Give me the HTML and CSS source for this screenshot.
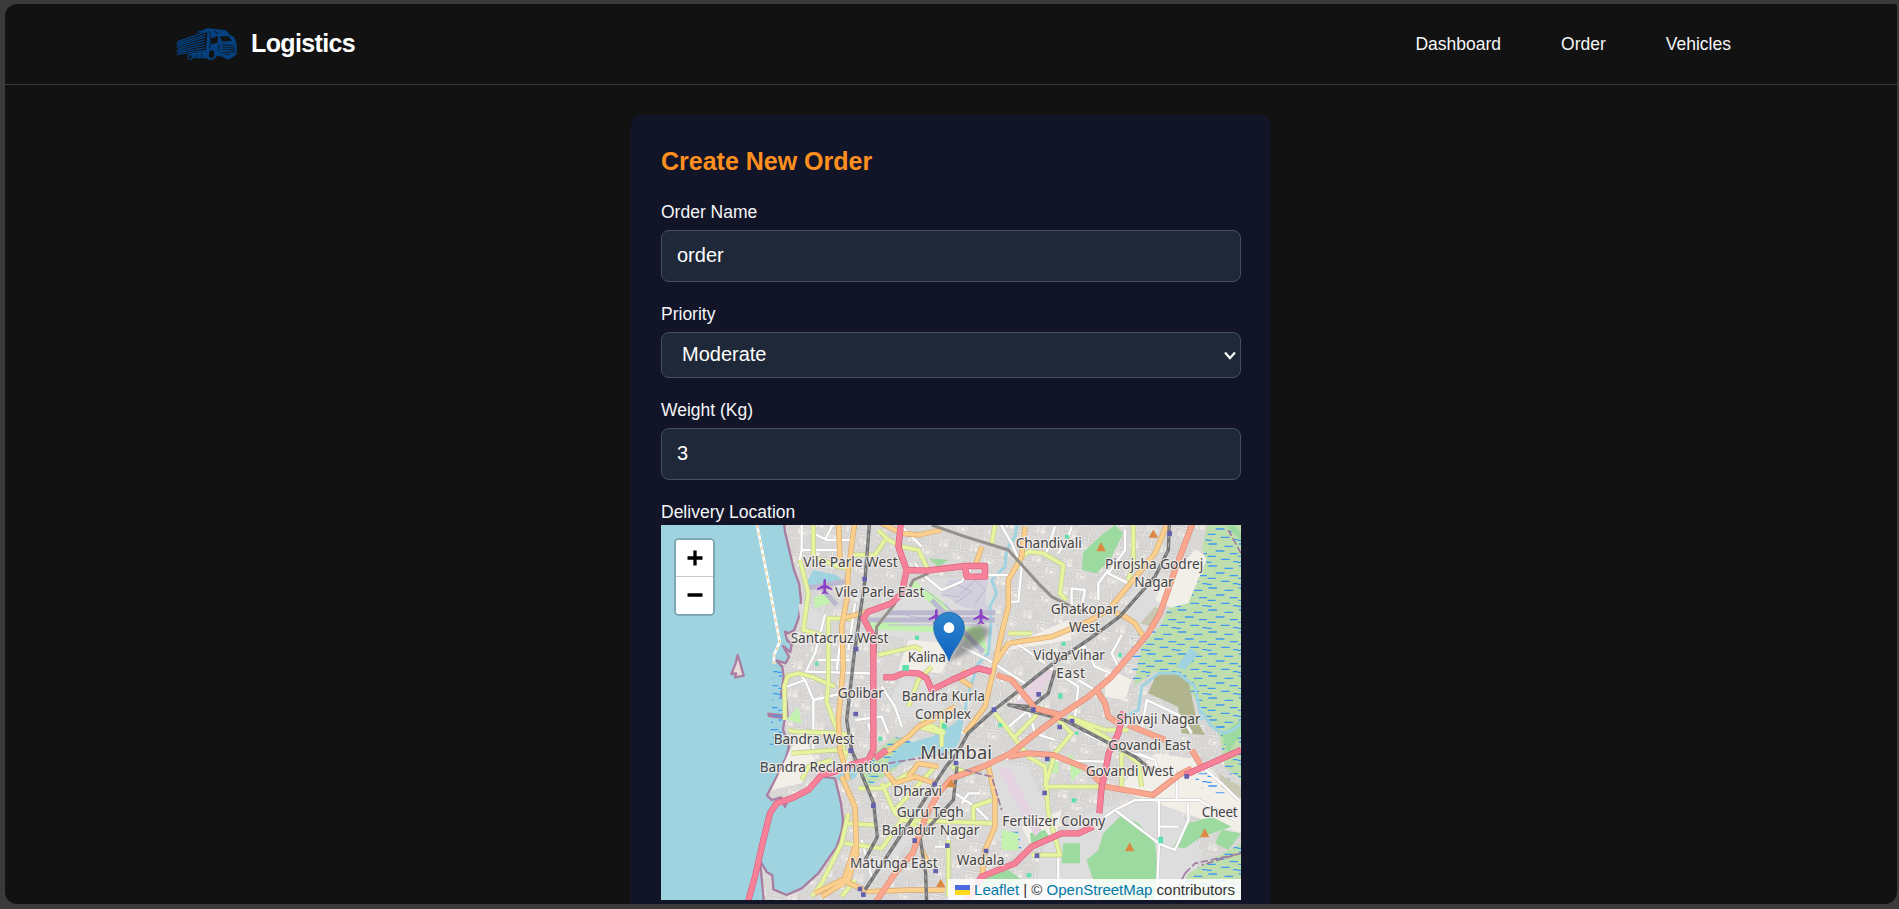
FILE: index.html
```
<!DOCTYPE html>
<html lang="en">
<head>
<meta charset="utf-8">
<title>Logistics</title>
<link rel="stylesheet" href="styles.css">
</head>
<body>
<div class="frame">
  <header class="header">
    <a class="brand">
      <svg class="logo" viewBox="0 0 186 100">
        <g class="truck-lines"><path d="M6 42L92 12M4 48L92 20M6 53L90 28M4 59L90 36M7 64L90 44M4 70L90 52M8 74L90 60M4 80L90 68M40 80L95 75"/></g>
        <path class="truck" d="M60 14L98 1L150 6Q160 10 164 20L178 27Q186 40 186 56V80L166 94Q154 98 146 88L126 84Q118 98 106 97Q94 96 92 84L50 88L48 78L92 70L97 14Z"/>
        <ellipse class="truck" cx="45" cy="88" rx="8" ry="9"/><path class="truck" d="M54 80H93V92H54Z"/>
        <g class="cut"><path d="M110 32L128 26L127 44L110 48Z"/><path d="M136 27L160 26L170 38L143 40Z"/><path d="M103 10Q110 30 104 62M132 48V72M140 50L178 54M141 57L180 61M142 64L180 67M139 75L184 72M66 80L63 90M80 78V88"/><ellipse cx="110" cy="79" rx="7" ry="11"/><ellipse cx="45" cy="88" rx="3" ry="5"/><path d="M118 9L132 19M150 80H164"/></g>
      </svg>
      <span>Logistics</span>
    </a>
    <nav class="nav"><a>Dashboard</a><a>Order</a><a>Vehicles</a></nav>
  </header>

  <main class="card">
    <h1>Create New Order</h1>
    <div class="field"><label for="name">Order Name</label><input id="name" type="text" value="order"></div>
    <div class="field"><label for="priority">Priority</label>
      <div class="select"><select id="priority"><option>Moderate</option></select>
      <svg class="chevron" viewBox="0 0 12 9"><path d="M1 1.5L6 7L11 1.5"/></svg></div>
    </div>
    <div class="field"><label for="weight">Weight (Kg)</label><input id="weight" type="text" value="3"></div>
    <div class="field map-field"><label>Delivery Location</label>
    <div class="map">
      <svg class="tiles" viewBox="18 15 1740 1125">
        <defs>
          <pattern id="streets" width="94" height="86" patternUnits="userSpaceOnUse" patternTransform="rotate(9)">
            <rect width="94" height="86" fill="#dad8d6"/>
            <path d="M8 8H34V30H8ZM54 42H84V66H54Z" fill="#f0ece6"/>
            <path d="M0 16H36L44 34H94M18 0V52L30 86M62 0V86M0 62H94M80 34V62M44 34L36 62M62 12H94M30 72H62M6 30V62M0 44H40M72 0V34M44 0V16L62 24M46 62V86M78 62V86M62 48H94" fill="none" stroke="#bdbbba" stroke-width="5"/>
            <path d="M0 16H36L44 34H94M18 0V52L30 86M62 0V86M0 62H94M80 34V62M44 34L36 62M62 12H94M30 72H62M6 30V62M0 44H40M72 0V34M44 0V16L62 24M46 62V86M78 62V86M62 48H94" fill="none" stroke="#f3f2f0" stroke-width="2.5"/>
          </pattern>
          <pattern id="marsh" width="92" height="66" patternUnits="userSpaceOnUse">
            <path d="M4 6H30M52 13H78M26 27H52M68 35H92M2 43H26M42 52H68M0 61H14M78 59H92" stroke="#3f98f5" stroke-width="4"/>
          </pattern>
          <linearGradient id="pin" x1="0" y1="0" x2="0" y2="1"><stop offset="0" stop-color="#2e85cb"/><stop offset="1" stop-color="#0e62c4"/></linearGradient>
          <filter id="soft"><feGaussianBlur stdDeviation="1.2"/></filter>
          <filter id="shade"><feGaussianBlur stdDeviation="6"/></filter>
        </defs>
        <rect width="1800" height="1200" fill="#9fd3e0"/>
        <g filter="url(#soft)">
        <path id="land" class="coast" fill="url(#streets)" d="M385 -10L390 35L405 100L417 150L432 190L438 240L432 290L418 330L400 340L390 335L396 360L410 372L406 396L384 378L402 410L392 430L362 420L382 440L386 470L378 528L394 540L398 588L340 581L342 588L390 594L384 628L402 680L394 710L365 770L336 826L350 840L378 832L390 860L400 838L430 826L465 810L500 770L540 775L558 850L564 900L560 935L545 980L490 1060L440 1105L395 1125L355 1108L352 1066L335 1056L315 1022L328 1160H1800V-10Z"/>
        <path class="coast" fill="#e9dcdd" d="M248 405L242 430L229 462L243 460L240 472L266 467L256 430Z"/>

        <!-- land cover -->
        <g fill="#dedddd">
          <path d="M780 190L1010 160L1030 390L900 400L660 330Z"/><path d="M1430 210L1560 150L1530 260L1480 340L1400 290Z"/>
          <path d="M1010 720L1120 740L1180 880L1120 1000L1020 960Z"/><path d="M1170 970L1330 860L1560 840L1640 1000L1590 1160H1130Z"/>
          <path d="M1430 560L1490 540L1620 600L1570 660L1440 620Z"/><path d="M740 470L820 500L870 560L780 600L700 560Z"/><path d="M430 250L540 290L500 360L440 340Z"/>
          <path d="M690 1000L750 920L770 960L680 1060L640 1090Z"/>
        </g>
        <g fill="#f2efe9">
          <path d="M1170 330L1240 300L1250 360L1060 390L1080 370Z"/><path d="M1350 440L1430 480L1410 540L1350 530Z"/><path d="M1520 195L1620 90L1660 110L1600 250L1550 265L1500 240Z"/>
          <path d="M1500 700L1640 720L1758 840V940L1480 840L1380 810Z"/><path d="M760 360L900 370L860 460L730 450Z"/><path d="M440 630L400 700L350 810L440 790L480 720Z"/><path d="M1100 920L1220 870L1200 960L1130 980Z"/>
        </g>
        <g fill="#bfdeae">
          <path d="M1760 0H1660L1640 90L1655 120L1600 250L1540 265L1515 320L1460 380L1435 500L1500 455L1580 480L1650 580L1700 660H1760Z"/>
          <path d="M1758 600L1690 620L1710 740L1758 780Z"/><path d="M1600 1060L1758 970V1150H1560Z"/>
          <path d="M600 740L720 650L790 670L720 750L640 800Z"/>
        </g>
        <path fill="url(#marsh)" d="M1760 20H1665L1640 90L1655 120L1600 250L1540 265L1515 320L1430 350L1435 500L1500 455L1580 480L1650 580L1700 660H1760Z"/>
        <path fill="url(#marsh)" d="M1758 600L1690 620L1710 740L1758 780ZM1600 1060L1758 970V1150H1560ZM640 730L720 650L790 670L720 750L640 800ZM1035 940L1090 930L1100 990L1050 990ZM355 440H380V680H345ZM1610 760H1730V820H1650Z"/>
        <g fill="#9ddaa0">
          <path d="M1285 95L1340 45L1380 15L1405 40L1365 120L1325 160L1280 150Z"/>
          <path d="M1345 940L1400 885L1450 910L1500 970L1512 1080V1160H1340L1295 1020L1330 990Z"/><path d="M1555 980L1600 910L1670 890L1730 920L1640 950L1590 985Z"/>
          <path d="M1225 970H1275V1030H1220ZM1700 930L1758 940L1720 990L1680 970Z"/><path d="M1125 940L1170 930L1190 960L1130 980Z"/><path d="M1715 20L1758 60V40L1740 15Z"/>
          <path d="M970 1070L1060 1050L1130 1100H970Z"/><path d="M820 115L880 120L850 140Z"/><path d="M1700 640L1758 600V640L1720 700Z"/>
        </g>
        <g fill="#c3f1b0">
          <path d="M475 235L520 215L525 250L480 265Z"/><path d="M640 290L760 315L980 320L1000 405L900 340L640 328Z"/><path d="M775 180L860 240L900 300L880 300L770 200Z"/><path d="M1040 930L1090 940L1090 990L1040 990Z"/><path d="M1175 720H1210V760H1180ZM1240 700L1290 740L1250 785Z"/><path d="M395 600L430 560L440 610Z"/>
        </g>
        <g fill="#d1d0dc"><path d="M880 180L1000 170L990 240L1010 280L920 260L860 220Z"/></g>
        <path fill="#e5d3e2" d="M1030 750L1060 740L1160 930L1140 950ZM1170 440L1200 450L1150 530L1100 580L1070 560Z"/>
        <path fill="#b0b58e" d="M1480 520L1500 470L1540 455L1600 480L1625 600L1650 645L1580 640L1570 560Z"/><path fill="#c8c8b3" d="M1455 310L1500 260L1520 270L1490 320ZM1690 760L1758 800V835L1700 800Z"/>
        <g fill="#9fd3e0"><path d="M455 185L475 150L545 165L560 180L460 205Z"/><path d="M1565 440L1605 385L1630 400L1590 450Z"/><path d="M700 720L740 675L830 650L900 610L930 570L915 660L890 700L780 710L700 750Z"/><path d="M540 770L620 735L600 775L560 790Z"/></g>
        <path d="M1085 15L1080 50L1055 90L1050 140L1010 180L1025 220L1005 260L1008 310L1005 350L1000 400L970 430L940 520L930 570M1640 600L1620 500L1570 460L1510 460L1460 500L1450 570L1390 600M1640 570Q1690 680 1758 610" class="river"/>
        <g class="runway"><path d="M640 300H1020M700 278H1020M830 240L985 395M450 205L570 185M500 205L545 255"/></g>
        <g fill="none" stroke="#b9b7d1" stroke-width="3"><path d="M680 292L720 275L780 292H980M860 225L910 230L960 180L990 210L960 250M900 190L950 215L900 250M700 315H980M870 250L960 370M940 280L1010 280M800 200L900 280"/></g>

        <!-- minor streets -->
        <g class="street case"><use href="#r-street"/></g>
        <g class="street">
          <path id="r-street" d="M440 15V90L430 140M440 90H550M465 35L515 60H600M540 0L510 60M510 285L480 400L455 450M395 500L450 480L430 460M450 480L475 540V700M475 540L560 520M490 420H585M450 455L650 460M560 330L545 450M600 250L580 390M780 130L805 165L860 210L920 185L950 140M980 165H1060M1030 0L1070 70L1100 140L1090 245H1060M740 20L800 80M1200 20L1170 110M1210 100L1240 50L1250 20M1410 30V90L1360 160L1420 190M1360 150L1330 190V240M1250 260L1250 205L1290 210L1280 260M1400 345L1370 400L1390 440M1240 400L1290 380L1320 440L1380 465M1180 440L1270 500L1260 590M1270 480L1320 510M1060 360L1100 380L1170 430M920 380L1000 420L1110 490L1090 540M600 600L680 590L700 640M640 610L660 680M680 500L720 560L740 620M1050 630L1120 570L1140 640L1200 660M1190 720L1350 725M1290 640L1400 690L1500 720M1350 890L1380 870L1440 840H1630L1740 900M1512 840V970L1380 870M1512 970L1505 1140M1512 920H1570M1510 970L1560 990L1600 900V850M1565 840V780L1560 750M1640 740L1700 790L1750 840M1210 1000V1140M1460 630L1475 540L1580 590L1610 640M1450 700L1500 720L1510 760M620 960L650 1070M840 980H880V930M900 820L960 860L1000 900M920 850L940 820L975 820"/>
        </g>

        <!-- yellow roads -->
        <g class="tertiary case"><use href="#r-tertiary"/></g>
        <g class="tertiary">
          <path id="r-tertiary" d="M475 15V110L550 140H590M435 120L460 220L445 330L500 345M530 130L590 150M520 295H590M520 290V490L515 545L535 600L560 660L570 720M390 600L388 500L398 468L430 460L470 470L540 500M400 630L420 635L560 640L590 650M410 700L540 690L580 700M440 780L460 740L530 720M590 105H660L690 60M670 30L700 60L740 80L790 90L820 150M1100 110L1120 95L1165 100L1225 135L1215 220L1235 240M1435 15V130L1420 180M1060 340H1130M670 405L780 380L800 390M1010 70L1020 15M830 440L790 480L760 560M1020 580L1060 630L1120 710L1170 740L1180 880M1210 600L1250 640L1200 700L1170 800M1160 560L1140 590L1080 650M610 805H680L780 750M680 790L720 880L800 930M720 870L840 740M840 620L790 620L860 640M860 570V680M800 600L870 640M740 900L1020 910M955 900V860L1010 840M880 960V1130M570 910L660 915M570 970L680 985L760 870M580 880L560 970L500 1090L470 1130M890 740L940 760L980 745M1240 590L1350 630L1420 630M1240 590L1350 650L1450 730L1460 800M1170 800H1340M1400 700V800M1180 880L1215 1005H1130M560 1130L600 1080"/>
        </g>

        <!-- orange roads -->
        <g class="secondary case"><use href="#r-secondary"/></g>
        <g class="secondary">
          <path id="r-secondary" d="M550 -10L555 120M600 0L580 150L575 240L560 320L565 440L550 600L555 690L580 780M560 295L620 280L650 270M680 10L740 40L790 45L860 30M980 80L960 140M1110 20L1100 110L1060 180L1060 260L1040 340L1020 430L990 560L930 640M950 500L920 480L930 450M1020 430L1060 370L1190 350L1310 300M1535 15L1500 100L1360 270L1290 310M1360 270L1410 290L1440 310L1465 350M900 560L850 590L790 620L760 650L690 700M690 750L720 790L780 770L840 790M760 770L790 730L850 740M1000 740L1020 830L1020 920L990 990L980 1080M560 770L600 860L605 1000L580 1080L500 1130M480 1120L560 1080L640 1115L760 1110L870 1110M600 980L560 1100M800 990L820 1030"/>
        </g>

        <!-- railways -->
        <g class="rail"><path id="r-rail" d="M645 -10L630 180L598 400L575 600L590 690L656 850L667 950L630 1020M906 740L895 840L795 950L812 1060L815 1150M1544 -10L1540 90L1500 170L1394 290L1306 355L1195 430L1017 570L939 640L906 700L873 740L795 860L728 960L630 1110M1200 450L1180 520L1130 560L1061 555L1228 600L1440 710L1490 750"/></g>
        <g class="rail-dash"><use href="#r-rail"/></g>
        <path class="metro" d="M740 -10L735 120M830 15L930 50L1060 90L1150 190L1190 230L1290 280M660 400L665 320L720 250M765 200L775 180L820 160"/>

        <!-- main roads -->
        <g class="primary case"><use href="#r-primary"/></g>
        <g class="primary"><path id="r-primary" d="M1620 -10L1560 150L1515 280L1480 340L1370 470L1300 530L1217 585L1130 650L1072 697L984 740L890 775L850 820L812 890L773 1000L720 1060L660 1150M1060 710L1120 700L1195 705L1294 745L1350 800L1494 825L1572 765L1610 745M1328 515L1350 550L1360 590L1390 610M1420 615L1530 660M1610 690L1640 740M1025 465L1070 480L1120 540L1140 565L1217 585"/></g>
        <g class="trunk case"><use href="#r-trunk"/></g>
        <g class="trunk"><path id="r-trunk" d="M740 -10L730 80L755 150L740 220L710 250L640 275L625 295L655 350V690L640 720L600 730L540 755L500 765L460 810L410 835L365 850L345 880L325 960L300 1070L275 1160M745 150L815 152L930 138H990V170H935L930 140M685 472H715L750 458L790 460L815 475L830 510L890 480L970 445L1010 455M660 715L695 690M1405 575L1390 640L1361 700L1350 760L1340 800L1333 880M930 1150L980 1070L1080 1030L1130 980L1220 940L1270 940L1315 920M1590 765L1758 690"/></g>
        <path class="boundary" d="M700 730L880 700M930 750L1010 770L1040 870M1758 100L1720 30M1590 1060L1620 1030L1758 1000L1640 1035M1590 1060L1550 1140"/>
        <path d="M306 15L345 210L374 365L357 405V432" stroke="#fff" stroke-width="8" fill="none"/><path d="M306 15L345 210L374 365L357 405V432" stroke="#f5c983" stroke-width="4" fill="none" stroke-dasharray="10 12"/>
        <g fill="#6360ae"><path d="M622 170h14v14h-14zM596 380h14v14h-14zM595 575h14v14h-14zM580 685h14v14h-14zM896 722h14v14h-14zM832 785h14v14h-14zM648 850h14v14h-14zM772 955h14v14h-14zM870 970h14v14h-14zM835 1046h14v14h-14zM986 986h14v14h-14zM1139 1000h14v14h-14zM1162 812h14v14h-14zM1170 710h14v14h-14zM1010 562h14v14h-14zM1128 562h14v14h-14zM1144 516h14v14h-14zM1537 34h14v14h-14zM1588 762h14v14h-14zM1207 614h14v14h-14zM1244 596h14v14h-14zM608 1100h14v14h-14zM618 1117h14v14h-14z"/></g>
        <g fill="#5de0ac"><path d="M742 435h20v17h-20zM780 347h12v12h-12zM480 425h10v12h-10zM1230 45h12v12h-12zM1220 365h12v12h-12zM1390 398h10v14h-10zM1210 520h12v16h-12zM860 610h16v16h-16zM1030 610h12v12h-12zM670 650h12v12h-12zM1250 835h14v12h-14zM1510 950h14v20h-14zM1115 1060h14v12h-14zM1260 635h10v10h-10z"/></g>
        <g fill="#dd8842"><path d="M1338 66L1352 94H1324ZM1495 28L1509 53H1481ZM1424 967L1438 994H1410ZM1649 925L1663 952H1635ZM888 777L903 802H873ZM857 1077L871 1101H843Z"/></g>
        <g fill="#8e3fc7"><path id="plane" d="M509 176Q513 176 513 184V194L532 206V211L513 205V215L519 220V223L509 220L499 223V220L505 215V205L486 211V206L505 194V184Q505 176 509 176Z"/><use href="#plane" x="335" y="90"/><use href="#plane" x="469" y="90"/></g>
        </g>

        <g class="labels">
          <text x="445" y="141" textLength="283">Vile Parle West</text><text x="540" y="230" textLength="268">Vile Parle East</text>
          <text x="407" y="370" textLength="293">Santacruz West</text><text x="758" y="427" textLength="115">Kalina</text>
          <text x="548" y="533" textLength="139">Golibar</text><text x="740" y="543" textLength="250">Bandra Kurla</text><text x="780" y="596" textLength="168">Complex</text>
          <text x="1082" y="83" textLength="198">Chandivali</text><text x="1350" y="147" textLength="295">Pirojsha Godrej</text><text x="1438" y="201" textLength="118">Nagar</text>
          <text x="1187" y="282" textLength="203">Ghatkopar</text><text x="1242" y="335" textLength="93">West</text><text x="1135" y="420" textLength="215">Vidya Vihar</text><text x="1204" y="473" textLength="86">East</text>
          <text x="1384" y="612" textLength="253">Shivaji Nagar</text><text x="1360" y="690" textLength="248">Govandi East</text><text x="1292" y="767" textLength="264">Govandi West</text>
          <text x="356" y="671" textLength="242">Bandra West</text><text x="314" y="755" textLength="388">Bandra Reclamation</text>
          <text class="city" x="796" y="716" textLength="215">Mumbai</text><text x="715" y="829" textLength="146">Dharavi</text><text x="725" y="892" textLength="201">Guru Tegh</text><text x="680" y="945" textLength="293">Bahadur Nagar</text>
          <text x="585" y="1043" textLength="263">Matunga East</text><text x="905" y="1034" textLength="143">Wadala</text><text x="1042" y="919" textLength="309">Fertilizer Colony</text><text x="1640" y="892" textLength="108">Cheet</text>
        </g>

        <path d="M882 425L930 335Q970 300 1005 330Q995 370 882 425Z" fill="#333" opacity=".4" filter="url(#shade)"/>
        <path d="M882 423C872 388 836 360 836 322A46 45 0 0 1 928 322C928 360 892 388 882 423Z" fill="url(#pin)" stroke="#2870b0" stroke-width="3"/><circle cx="882" cy="323" r="16" fill="#fff"/>
      </svg>
      <div class="zoom">
        <button aria-label="Zoom in"><svg viewBox="0 0 16 16"><path d="M.5 8h15M8 .5v15"/></svg></button>
        <button aria-label="Zoom out"><svg viewBox="0 0 16 16"><path d="M.5 8h15"/></svg></button>
      </div>
      <div class="attribution"><svg class="flag" viewBox="0 0 15 10"><path fill="#4c68e0" d="M0 0h15v5H0z"/><path fill="#ffd91a" d="M0 5h15v5H0z"/></svg><span><a>Leaflet</a> | © <a>OpenStreetMap</a> contributors</span></div>
    </div></div>
  </main>
</div>
</body>
</html>
```
FILE: styles.css
```
* { box-sizing: border-box; }
body { margin: 0; height: 909px; padding: 4px 2px 5px 5px; overflow: hidden; background: #3b3b3b; color: #f5f6f8; font: 17.5px/25px "Liberation Sans", Arial, sans-serif; }
.frame { height: 900px; overflow: hidden; background: #121212; border-radius: 12px 2px 12px 12px; }
.header { height: 81px; display: flex; justify-content: space-between; align-items: center; padding: 0 166px 0 170px; border-bottom: 1px solid #3a3a3a; }
.brand { display: flex; align-items: center; gap: 14px; color: #fff; font-size: 25px; font-weight: bold; letter-spacing: -.625px; }
.brand span { padding-bottom: 2px; }
.logo { width: 62px; height: 33px; }
.truck { fill: #05407f; }
.truck-lines { stroke: #05407f; stroke-width: 4; fill: none; }
.cut { fill: #121212; stroke: #121212; stroke-width: 2.5; }
.cut path:nth-of-type(n+3) { fill: none; }
.nav { display: flex; gap: 60px; }
.card { width: 640px; height: 830px; margin: 30px auto 0; padding: 30px; background: #121528; border-radius: 10px; display: flex; flex-direction: column; gap: 19px; }
h1 { margin: 0 0 2px; color: #ff8f1f; font-size: 25px; line-height: 33px; }
.field { display: flex; flex-direction: column; gap: 6px; }
.field.map-field { gap: 1px; }
label { display: block; padding-top: 1px; height: 25px; }
input, select { display: block; width: 100%; height: 52px; border: 1px solid #465061; border-radius: 8px; background: #1f2838; padding: 0 15px 1px; color: #fff; font: 20px "Liberation Sans", Arial, sans-serif; outline: 0; }
select { height: 46px; padding-left: 20px; padding-bottom: 2px; appearance: none; }
.select { position: relative; }
.chevron { position: absolute; right: 5px; top: 19px; width: 12px; height: 9px; fill: none; stroke: #fff; stroke-width: 2.2; }
.map { position: relative; height: 375px; overflow: hidden; }
.tiles { display: block; width: 580px; height: 375px; }
.tiles path { stroke-linejoin: round; }
.coast { stroke: #aa7ea1; stroke-width: 7; }
.river { fill: none; stroke: #9fd3e0; stroke-width: 9; }
.runway { fill: none; stroke: #bbb9cf; stroke-width: 15; }
.street { fill: none; stroke: #fff; stroke-width: 7; }
.street.case { stroke: #c6c4c2; stroke-width: 10; }
.tertiary { fill: none; stroke: #e6f49f; stroke-width: 11; }
.tertiary.case { stroke: #c3cc8d; stroke-width: 15; }
.secondary { fill: none; stroke: #fbcf8e; stroke-width: 12; }
.secondary.case { stroke: #d9a868; stroke-width: 16; }
.rail { fill: none; stroke: #747474; stroke-width: 10; }
.rail-dash { fill: none; stroke: #a8a8a8; stroke-width: 3; stroke-dasharray: 14 12; }
.metro { fill: none; stroke: #959089; stroke-width: 9; }
.primary { fill: none; stroke: #fba78f; stroke-width: 14; }
.primary.case { stroke: #dc8b78; stroke-width: 18; }
.trunk { fill: none; stroke: #f8819a; stroke-width: 15; }
.trunk.case { stroke: #d9627f; stroke-width: 19; }
.boundary { fill: none; stroke: #a07c9f; stroke-width: 5; stroke-dasharray: 22 8; }
.labels { font: 41px "Noto Sans", sans-serif; fill: #454545; stroke: #f3f0ee; stroke-opacity: .8; stroke-width: 7; paint-order: stroke; stroke-linejoin: round; }
.city { font-size: 55px; }
.zoom { position: absolute; left: 13px; top: 13px; width: 41px; border: 2px solid #7ea8b3; border-radius: 5px; overflow: hidden; background: #fff; }
.zoom button { display: flex; align-items: center; justify-content: center; width: 37px; height: 37px; padding: 0 0 1px; border: 0; background: #fff; }
.zoom button:first-child { border-bottom: 1px solid #ccc; }
.zoom svg { width: 16px; height: 16px; stroke: #000; stroke-width: 3.3; }
.attribution { position: absolute; right: 0; bottom: 0; width: 293px; height: 21px; padding: 0 6px 0 7px; display: flex; align-items: center; justify-content: space-between; background: rgba(255, 255, 255, .85); color: #333; font-size: 15px; line-height: 21px; white-space: nowrap; }
.attribution a { color: #0078a8; }
.flag { width: 15px; height: 10px; }
```
